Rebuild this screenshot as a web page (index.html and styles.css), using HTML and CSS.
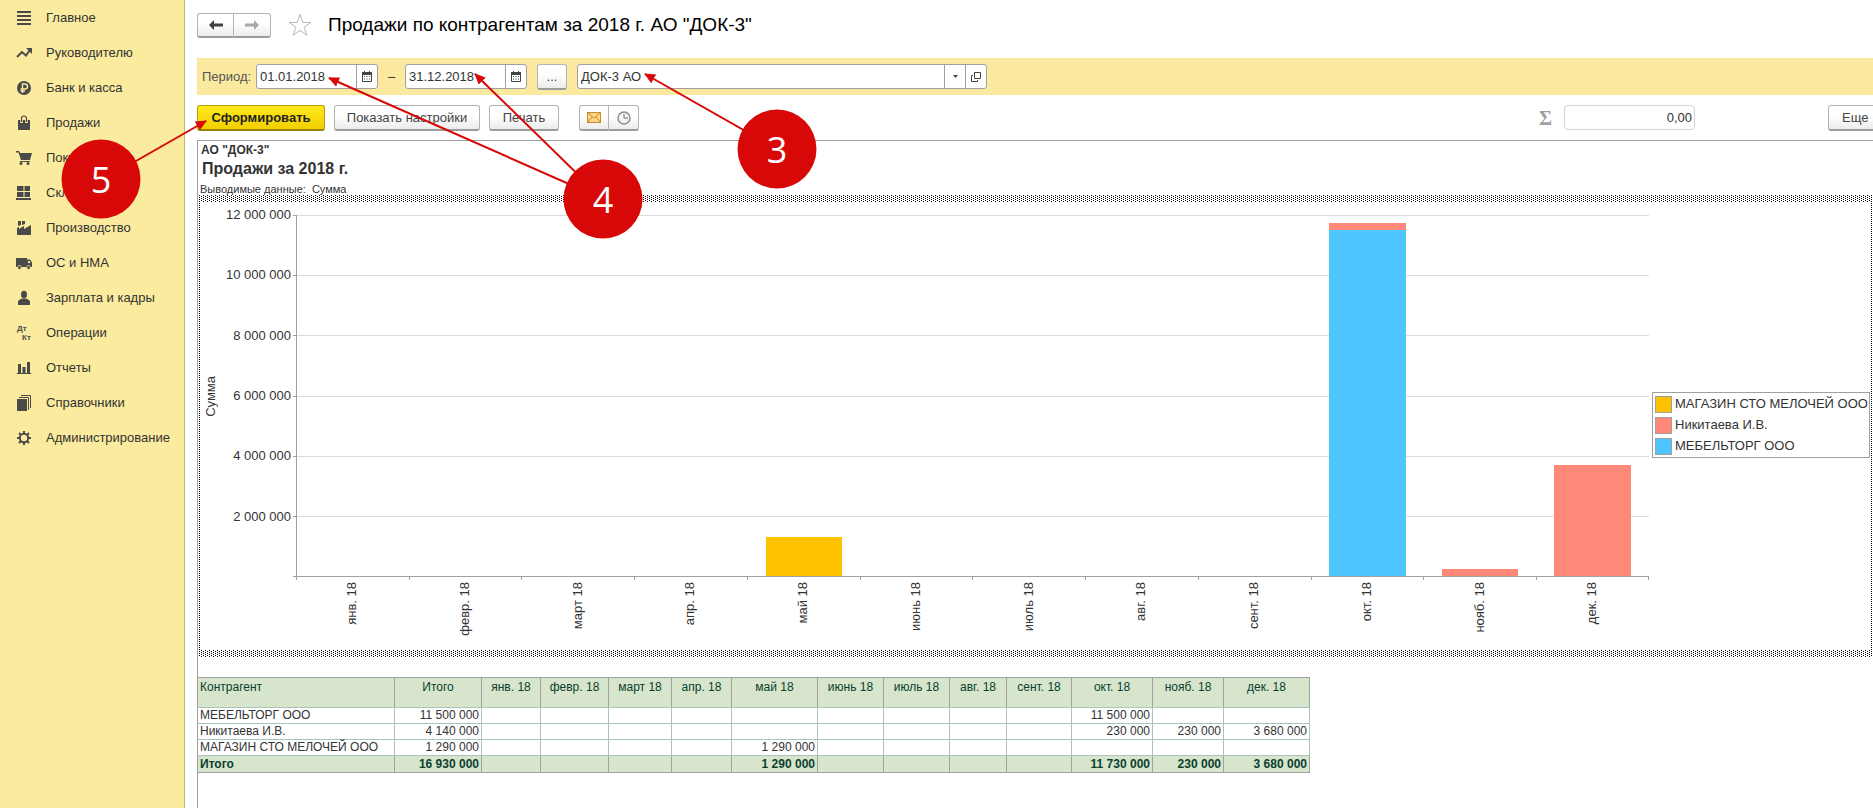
FILE: index.html
```html
<!DOCTYPE html>
<html lang="ru">
<head>
<meta charset="utf-8">
<title>Продажи по контрагентам</title>
<link rel="stylesheet" href="styles.css">
</head>
<body>
<div class="app">
  <nav class="sidebar">
    <a href="#"><svg class="ico" viewBox="0 0 16 16"><path d="M1 1h14v2H1zM1 5h14v2H1zM1 9h14v2H1zM1 13h14v2H1z"/></svg>Главное</a>
    <a href="#"><svg class="ico" viewBox="0 0 16 16"><path d="M1 12l5-5 4 3.500 4-5.500" fill="none" stroke="#4a4a4a" stroke-width="2"/><path d="M10 3h6v6z"/></svg>Руководителю</a>
    <a href="#"><svg class="ico" viewBox="0 0 16 16"><circle cx="8" cy="8" r="7"/><path d="M6.500 13V4h2.500a2.300 2.300 0 0 1 0 5H4.500M4.500 11H9" fill="none" stroke="#fbeb9e" stroke-width="1.400"/></svg>Банк и касса</a>
    <a href="#"><svg class="ico" viewBox="0 0 16 16"><path d="M2 5h12v10H2z"/><path d="M5.500 8V3.500a2.500 2.500 0 0 1 5 0V8" fill="none" stroke="#fbeb9e" stroke-width="2.600"/><path d="M5.500 7V3.500a2.500 2.500 0 0 1 5 0V7" fill="none" stroke="#4a4a4a" stroke-width="1.200"/></svg>Продажи</a>
    <a href="#"><svg class="ico" viewBox="0 0 16 16"><path d="M0 1h3l1 2h12l-2 7H5L2.500 2.500H0zM4 11h10v1H4z"/><circle cx="5" cy="13.500" r="1.500"/><circle cx="12" cy="13.500" r="1.500"/></svg>Покупки</a>
    <a href="#"><svg class="ico" viewBox="0 0 16 16"><path d="M1 1h6.500v5H1zM8.500 1H14v5H8.500zM1 7h6.500v5H1zM8.500 7H14v5H8.500zM0 13h15v2H0z"/></svg>Склад</a>
    <a href="#"><svg class="ico" viewBox="0 0 16 16"><path d="M1 15V8l2-1v2l5-3v3l7-4v10zM2 1h3v4l-3 1zM6 1h3v3L6 5z"/></svg>Производство</a>
    <a href="#"><svg class="ico" viewBox="0 0 16 16"><path d="M0 3h11v9H0zM11 4.500h3l2 3V12h-5z"/><path d="M12 6h1.500l1 2H12z" fill="#fbeb9e"/><circle cx="3.500" cy="12.500" r="1.900" stroke="#fbeb9e" stroke-width=".8"/><circle cx="12.500" cy="12.500" r="1.900" stroke="#fbeb9e" stroke-width=".8"/></svg>ОС и НМА</a>
    <a href="#"><svg class="ico" viewBox="0 0 16 16"><ellipse cx="8" cy="4.500" rx="3" ry="3.800"/><path d="M2 15v-3q0-2 4-3.500h4q4 1.500 4 3.500v3z"/></svg>Зарплата и кадры</a>
    <a href="#"><svg class="ico" viewBox="0 0 16 16"><text x="1" y="6" class="dk">Дт</text><text x="6" y="15" class="dk">Кт</text></svg>Операции</a>
    <a href="#"><svg class="ico" viewBox="0 0 16 16"><path d="M2 4h3v9H2zM6.500 7h3v6h-3zM11 2h3v11h-3zM1 13h14v1H1z"/></svg>Отчеты</a>
    <a href="#"><svg class="ico" viewBox="0 0 16 16"><path d="M1 4h10v12H1z"/><path d="M3 2.500h9.500V15M5 .500h9.500V13" fill="none" stroke="#4a4a4a"/></svg>Справочники</a>
    <a href="#"><svg class="ico" viewBox="0 0 16 16"><circle cx="8" cy="8" r="4.200" fill="none" stroke="#4a4a4a" stroke-width="2"/><path d="M8 1v3M8 12v3M1 8h3M12 8h3M3 3l2 2M11 11l2 2M13 3l-2 2M5 11l-2 2" stroke="#4a4a4a" stroke-width="2"/></svg>Администрирование</a>
  </nav>

  <main class="main">
    <header class="head">
      <div class="group">
        <button class="btn nav" aria-label="Назад"><svg width="14" height="10" viewBox="0 0 14 10"><path d="M0 5l5-5v3.500h9v3H5V10z" fill="#404040"/></svg></button>
        <button class="btn nav" aria-label="Вперед"><svg width="14" height="10" viewBox="0 0 14 10"><path d="M14 5L9 0v3.500H0v3h9V10z" fill="#a8a8a8"/></svg></button>
      </div>
      <svg class="star" viewBox="0 0 24 24"><path d="M12 1.500l2.700 8h8l-6.500 4.700 2.600 8.100L12 17.300l-6.800 5 2.600-8.100L1.300 9.500h8z" fill="none" stroke="#b4b9c2"/></svg>
      <h1>Продажи по контрагентам за 2018 г. АО "ДОК-3"</h1>
    </header>

    <section class="filter">
      <label for="from">Период:</label>
      <div class="field date"><input id="from" type="text" value="01.01.2018"><button aria-label="Календарь"><svg width="10" height="11" viewBox="0 0 10 11"><path d="M.500 2v8.500h9V2" fill="none" stroke="#444"/><path d="M0 1h10v3H0zM2 0h1v2H2zM7 0h1v2H7zM2 5h1v1H2zM4.500 5h1v1h-1zM7 5h1v1H7zM2 7.500h1v1H2zM4.500 7.500h1v1h-1zM7 7.500h1v1H7z" fill="#444"/></svg></button></div>
      <span class="dash">–</span>
      <div class="field date"><input type="text" value="31.12.2018" aria-label="Конец периода"><button aria-label="Календарь"><svg width="10" height="11" viewBox="0 0 10 11"><path d="M.500 2v8.500h9V2" fill="none" stroke="#444"/><path d="M0 1h10v3H0zM2 0h1v2H2zM7 0h1v2H7zM2 5h1v1H2zM4.500 5h1v1h-1zM7 5h1v1H7zM2 7.500h1v1H2zM4.500 7.500h1v1h-1zM7 7.500h1v1H7z" fill="#444"/></svg></button></div>
      <button class="btn dots">...</button>
      <div class="field org"><input type="text" value="ДОК-3 АО" aria-label="Организация"><button aria-label="Выбрать"><svg width="5" height="3" viewBox="0 0 5 3"><path d="M0 0h5L2.500 3z" fill="#444"/></svg></button><button aria-label="Открыть"><svg width="10" height="10" viewBox="0 0 10 10"><path d="M3.500.500h6v6h-6zM2 3.500H.500v6h6V8" fill="none" stroke="#444"/></svg></button></div>
    </section>

    <section class="tools">
      <button class="btn primary">Сформировать</button>
      <button class="btn settings">Показать настройки</button>
      <button class="btn print">Печать</button>
      <div class="group mail">
        <button class="btn" aria-label="Отправить"><svg width="14" height="11" viewBox="0 0 14 11"><rect x=".500" y=".500" width="13" height="10" fill="#fbd684" stroke="#c98a2b"/><path d="M1 1l6 5 6-5M1 10l4-5M13 10L9 5" fill="none" stroke="#c98a2b"/></svg></button>
        <button class="btn" aria-label="Расписание"><svg width="14" height="14" viewBox="0 0 14 14"><circle cx="7" cy="7" r="6" fill="#f4f4f4" stroke="#8c8c8c" stroke-width="1.400"/><path d="M7 3v4h4" fill="none" stroke="#777"/></svg></button>
      </div>
      <label class="sigma" for="sum">Σ</label>
      <input id="sum" class="sum" type="text" value="0,00">
      <button class="btn more">Еще</button>
    </section>

    <section class="report">
      <div class="org-name">АО "ДОК-3"</div>
      <h2>Продажи за 2018 г.</h2>
      <div class="params">Выводимые данные:&nbsp; Сумма</div>

      <div class="chart">
        <div class="axis-title"><span>Сумма</span></div>
        <div class="ylabels"><span>12 000 000</span><span>10 000 000</span><span>8 000 000</span><span>6 000 000</span><span>4 000 000</span><span>2 000 000</span></div>
        <div class="ticks"><i></i><i></i><i></i><i></i><i></i><i></i></div>
        <div class="plot">
          <div class="lines"><i></i><i></i><i></i><i></i><i></i><i></i></div>
          <div class="bars">
            <div></div><div></div><div></div><div></div>
            <div><b class="c1" style="height:10.750%"></b></div>
            <div></div><div></div><div></div><div></div>
            <div><b class="c2" style="height:2.100%"></b><b class="c3" style="height:95.800%"></b></div>
            <div><b class="c2" style="height:1.920%"></b></div>
            <div><b class="c2" style="height:30.700%"></b></div>
          </div>
        </div>
        <div class="xlabels"><span>янв. 18</span><span>февр. 18</span><span>март 18</span><span>апр. 18</span><span>май 18</span><span>июнь 18</span><span>июль 18</span><span>авг. 18</span><span>сент. 18</span><span>окт. 18</span><span>нояб. 18</span><span>дек. 18</span></div>
        <ul class="legend"><li><i class="c1"></i>МАГАЗИН СТО МЕЛОЧЕЙ ООО</li><li><i class="c2"></i>Никитаева И.В.</li><li><i class="c3"></i>МЕБЕЛЬТОРГ ООО</li></ul>
      </div>

      <table>
        <colgroup><col class="w197"><col class="w87"><col class="w59"><col class="w68"><col class="w63"><col class="w60"><col class="w86"><col class="w66"><col class="w66"><col class="w57"><col class="w65"><col class="w81"><col class="w71"><col class="w86"></colgroup>
        <thead><tr><th>Контрагент</th><th>Итого</th><th>янв. 18</th><th>февр. 18</th><th>март 18</th><th>апр. 18</th><th>май 18</th><th>июнь 18</th><th>июль 18</th><th>авг. 18</th><th>сент. 18</th><th>окт. 18</th><th>нояб. 18</th><th>дек. 18</th></tr></thead>
        <tbody>
          <tr><td>МЕБЕЛЬТОРГ ООО</td><td>11 500 000</td><td></td><td></td><td></td><td></td><td></td><td></td><td></td><td></td><td></td><td>11 500 000</td><td></td><td></td></tr>
          <tr><td>Никитаева И.В.</td><td>4 140 000</td><td></td><td></td><td></td><td></td><td></td><td></td><td></td><td></td><td></td><td>230 000</td><td>230 000</td><td>3 680 000</td></tr>
          <tr><td>МАГАЗИН СТО МЕЛОЧЕЙ ООО</td><td>1 290 000</td><td></td><td></td><td></td><td></td><td>1 290 000</td><td></td><td></td><td></td><td></td><td></td><td></td><td></td></tr>
        </tbody>
        <tfoot><tr><td>Итого</td><td>16 930 000</td><td></td><td></td><td></td><td></td><td>1 290 000</td><td></td><td></td><td></td><td></td><td>11 730 000</td><td>230 000</td><td>3 680 000</td></tr></tfoot>
      </table>
    </section>
  </main>

  <svg class="marks" width="860" height="250" viewBox="0 0 860 250">
    <defs><marker id="tip" viewBox="0 0 11 10" refX="10" refY="5" markerWidth="11" markerHeight="10" markerUnits="userSpaceOnUse" orient="auto"><path d="M0 0l11 5-11 5z" fill="#d80808"/></marker></defs>
    <g stroke="#d80808" stroke-width="2">
      <path d="M101 181L206 121" marker-end="url(#tip)"/>
      <path d="M603 199L329 78" marker-end="url(#tip)"/>
      <path d="M603 199L475 74" marker-end="url(#tip)"/>
      <path d="M777 149L645 74" marker-end="url(#tip)"/>
    </g>
    <g fill="#d80808"><circle cx="101" cy="179" r="39.500"/><circle cx="603" cy="199" r="39.500"/><circle cx="777" cy="149" r="39.500"/></g>
    <g class="num"><text x="101" y="193">5</text><text x="603" y="213">4</text><text x="777" y="163">3</text></g>
  </svg>
</div>
</body>
</html>
```
FILE: styles.css
```css
* { box-sizing: border-box; }
body { margin: 0; background: #fff; color: #333; font: 13px/16px "Liberation Sans", Arial, sans-serif; overflow: hidden; }
button, input { font: inherit; color: inherit; }
.app { display: flex; min-height: 100vh; position: relative; }

.sidebar { flex: none; width: 185px; background: #fbeb9e; border-right: 1px solid #c4b67a; }
.sidebar a { display: flex; align-items: center; gap: 14px; height: 35px; padding: 1px 0 0 16px; color: #333; text-decoration: none; white-space: nowrap; }
.ico { width: 16px; height: 16px; fill: #4a4a4a; flex: none; overflow: visible; }
.dk { font: bold 8px "Liberation Sans", Arial, sans-serif; }

.main { flex: 1; min-width: 0; padding-left: 12px; display: flex; flex-direction: column; overflow: hidden; }
.head { display: flex; align-items: center; height: 58px; padding-bottom: 8px; }
.head h1 { margin: 0 0 0 16px; font-size: 19px; line-height: 24px; font-weight: normal; color: #000; }
.star { width: 24px; height: 24px; margin-left: 17px; }

.btn { display: flex; align-items: center; justify-content: center; height: 26px; padding: 1px 0 0; border: 1px solid #b4b4b4; border-bottom: 2px solid #9c9c9c; border-radius: 3px; background: linear-gradient(#fff 40%, #ececec); color: #444; white-space: nowrap; }
.group { display: flex; }
.group .btn { width: 30px; }
.group .btn + .btn { border-left: 0; border-radius: 0 3px 3px 0; }
.group .btn:first-child { border-radius: 3px 0 0 3px; }
.group .nav { width: 37px; height: 25px; }

.filter { display: flex; align-items: center; height: 37px; padding-left: 5px; background: #fbe99f; }
.filter label { width: 54px; color: #555; }
.field { display: flex; height: 25px; border: 1px solid #a0a0a0; border-radius: 3px; background: #fff; }
.field input { flex: 1; min-width: 0; border: 0; padding: 0 0 0 3px; background: none; outline: 0; }
.field button { width: 21px; border: 0; border-left: 1px solid #a0a0a0; background: none; padding: 0; display: flex; align-items: center; justify-content: center; }
.date { width: 122px; }
.dash { width: 27px; text-align: center; }
.dots { width: 30px; margin: 0 10px; }
.org { width: 410px; }

.tools { display: flex; align-items: center; height: 45px; margin-right: -15px; }
.primary { width: 128px; margin-right: 9px; border-color: #b8a000; border-bottom-color: #988400; background: linear-gradient(#ffe81a, #f2d000); color: #222; font-weight: bold; }
.settings { width: 146px; margin-right: 9px; }
.print { width: 70px; margin-right: 20px; }
.sigma { margin-left: auto; width: 25px; font: bold 20px/24px "Liberation Serif", serif; color: #a0a0a0; }
.sum { width: 131px; height: 25px; margin-right: 133px; padding: 0 2px; border: 1px solid #d4d4d4; border-radius: 4px; text-align: right; }
.more { width: 60px; padding-left: 13px; justify-content: flex-start; }

.report { flex: 1; border: 1px solid #a0a0a0; border-width: 1px 0 0 1px; font-size: 12px; }
.org-name { padding: 1px 3px 0; line-height: 16px; font-weight: bold; }
.report h2 { margin: 0; padding-left: 4px; font-size: 16px; line-height: 22px; }
.params { padding: 1px 2px 0; height: 15px; font-size: 11px; line-height: 16px; }

.chart {
  --dot: conic-gradient(at 1px 1px, transparent 75%, #000 0);
  display: grid;
  grid-template: 362px 1fr / 26px 67px 3px minmax(0, 1fr) 221px;
  height: 462px; margin: 0 1px; padding: 20px 2px 7px 1px; font-size: 13px;
  background:
    linear-gradient(#fff, #fff) 1px 7px / calc(100% - 2px) calc(100% - 14px) no-repeat,
    var(--dot) 0 0 / 4px 2px,
    var(--dot) 2px 1px / 4px 2px;
}
.axis-title { display: flex; align-items: center; padding-left: 3px; }
.axis-title span, .xlabels span { writing-mode: vertical-rl; transform: rotate(180deg); white-space: nowrap; }
.ylabels, .ticks, .lines { display: flex; flex-direction: column; }
.ylabels { margin-top: -8px; margin-bottom: 8px; text-align: right; padding-right: 2px; white-space: nowrap; }
.ylabels span, .ticks i, .lines i { flex: 1; }
.ticks { border-bottom: 1px solid #a0a0a0; }
.ticks i { border-top: 1px solid #a0a0a0; }
.lines i { border-top: 1px solid #dcdcdc; }
.plot { display: grid; border-left: 1px solid #a0a0a0; border-bottom: 1px solid #a0a0a0; }
.lines, .bars { grid-area: 1 / 1; }
.bars { display: flex; }
.bars div { flex: 1; display: flex; flex-direction: column; justify-content: flex-end; padding: 0 18px; }
.c1 { background: #ffc000; }
.c2 { background: #ff8878; }
.c3 { background: #4dc6ff; }
.xlabels {
  grid-area: 2 / 4; display: flex; align-items: flex-start;
  background:
    linear-gradient(#a0a0a0, #a0a0a0) 100% 0 / 1px 3px no-repeat,
    repeating-linear-gradient(90deg, #a0a0a0 0 1px, transparent 1px calc(100% / 12)) 0 0 / 100% 3px no-repeat;
}
.xlabels span { flex: 1; line-height: 112px; text-align: right; padding-bottom: 5px; }
.legend { grid-area: 1 / 5; align-self: center; display: grid; gap: 4px; margin: 58px 0 0 3px; padding: 3px 0 2px 2px; border: 1px solid #a0a0a0; list-style: none; overflow: hidden; }
.legend li { display: flex; gap: 3px; line-height: 16px; white-space: nowrap; }
.legend i { flex: none; width: 17px; height: 17px; border: 1px solid #a0a0a0; }

table { margin-top: 20px; margin-left: -1px; border-collapse: collapse; table-layout: fixed; width: 1112px; line-height: 15px; }
td, th { border: 1px solid #a9c4b8; padding: 0 2px; white-space: nowrap; text-align: right; height: 16px; }
th { height: 30px; padding-top: 1px; border-color: #a0a0a0 #a0a0a0 #a9c4b8; vertical-align: top; text-align: center; font-weight: normal; line-height: 17px; }
th, tfoot td { background: #d6e5cb; color: #0a4030; }
td:first-child, th:first-child { text-align: left; border-left-color: #a0a0a0; }
tfoot td { height: 17px; border-color: #a0a0a0; font-weight: bold; }
.w197 { width: 197px; } .w87 { width: 87px; } .w59 { width: 59px; } .w68 { width: 68px; } .w63 { width: 63px; } .w60 { width: 60px; } .w86 { width: 86px; }
.w66 { width: 66px; } .w57 { width: 57px; } .w65 { width: 65px; } .w81 { width: 81px; } .w71 { width: 71px; }

.marks { position: absolute; top: 0; left: 0; pointer-events: none; }
.num { fill: #fff; font: 500 36px "Open Sans", "Noto Sans", sans-serif; text-anchor: middle; }
```
